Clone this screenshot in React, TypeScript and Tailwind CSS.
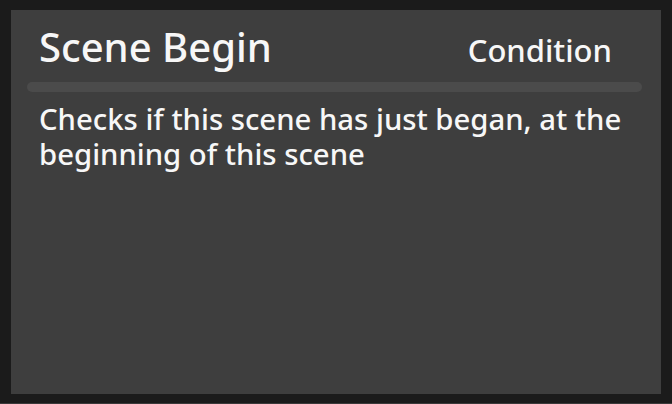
export default function App() {
    return (
        <div className="w-[672px] h-[404px] bg-[#3a3a3a]">
            <div className="h-[403px] bg-[#1b1b1b] pl-[11px] pt-[10px] pr-[11px] pb-[9px]">
                <div
                    className="h-full bg-[#3e3e3e] text-[#f7f7f7]"
                    style={{ fontFamily: '"Noto Sans", "Open Sans", sans-serif' }}
                >
                    {/* Header */}
                    <div className="flex items-baseline justify-between pl-[28px] pr-[49px] pt-[12px] h-[72px]">
                        <span className="text-[40px] leading-[50px] font-medium">Scene Begin</span>
                        <span className="text-[31px] leading-[42px] font-medium">Condition</span>
                    </div>
                    <div className="ml-[16px] mr-[19px] h-[10px] rounded-full bg-[#4b4b4b]" />
                    {/* Description */}
                    <p className="pl-[28px] pr-[20px] pt-[10px] text-[29.3px] leading-[35px] font-medium">
                        Checks if this scene has just began, at the beginning of this scene
                    </p>
                </div>
            </div>
        </div>
    );
}
